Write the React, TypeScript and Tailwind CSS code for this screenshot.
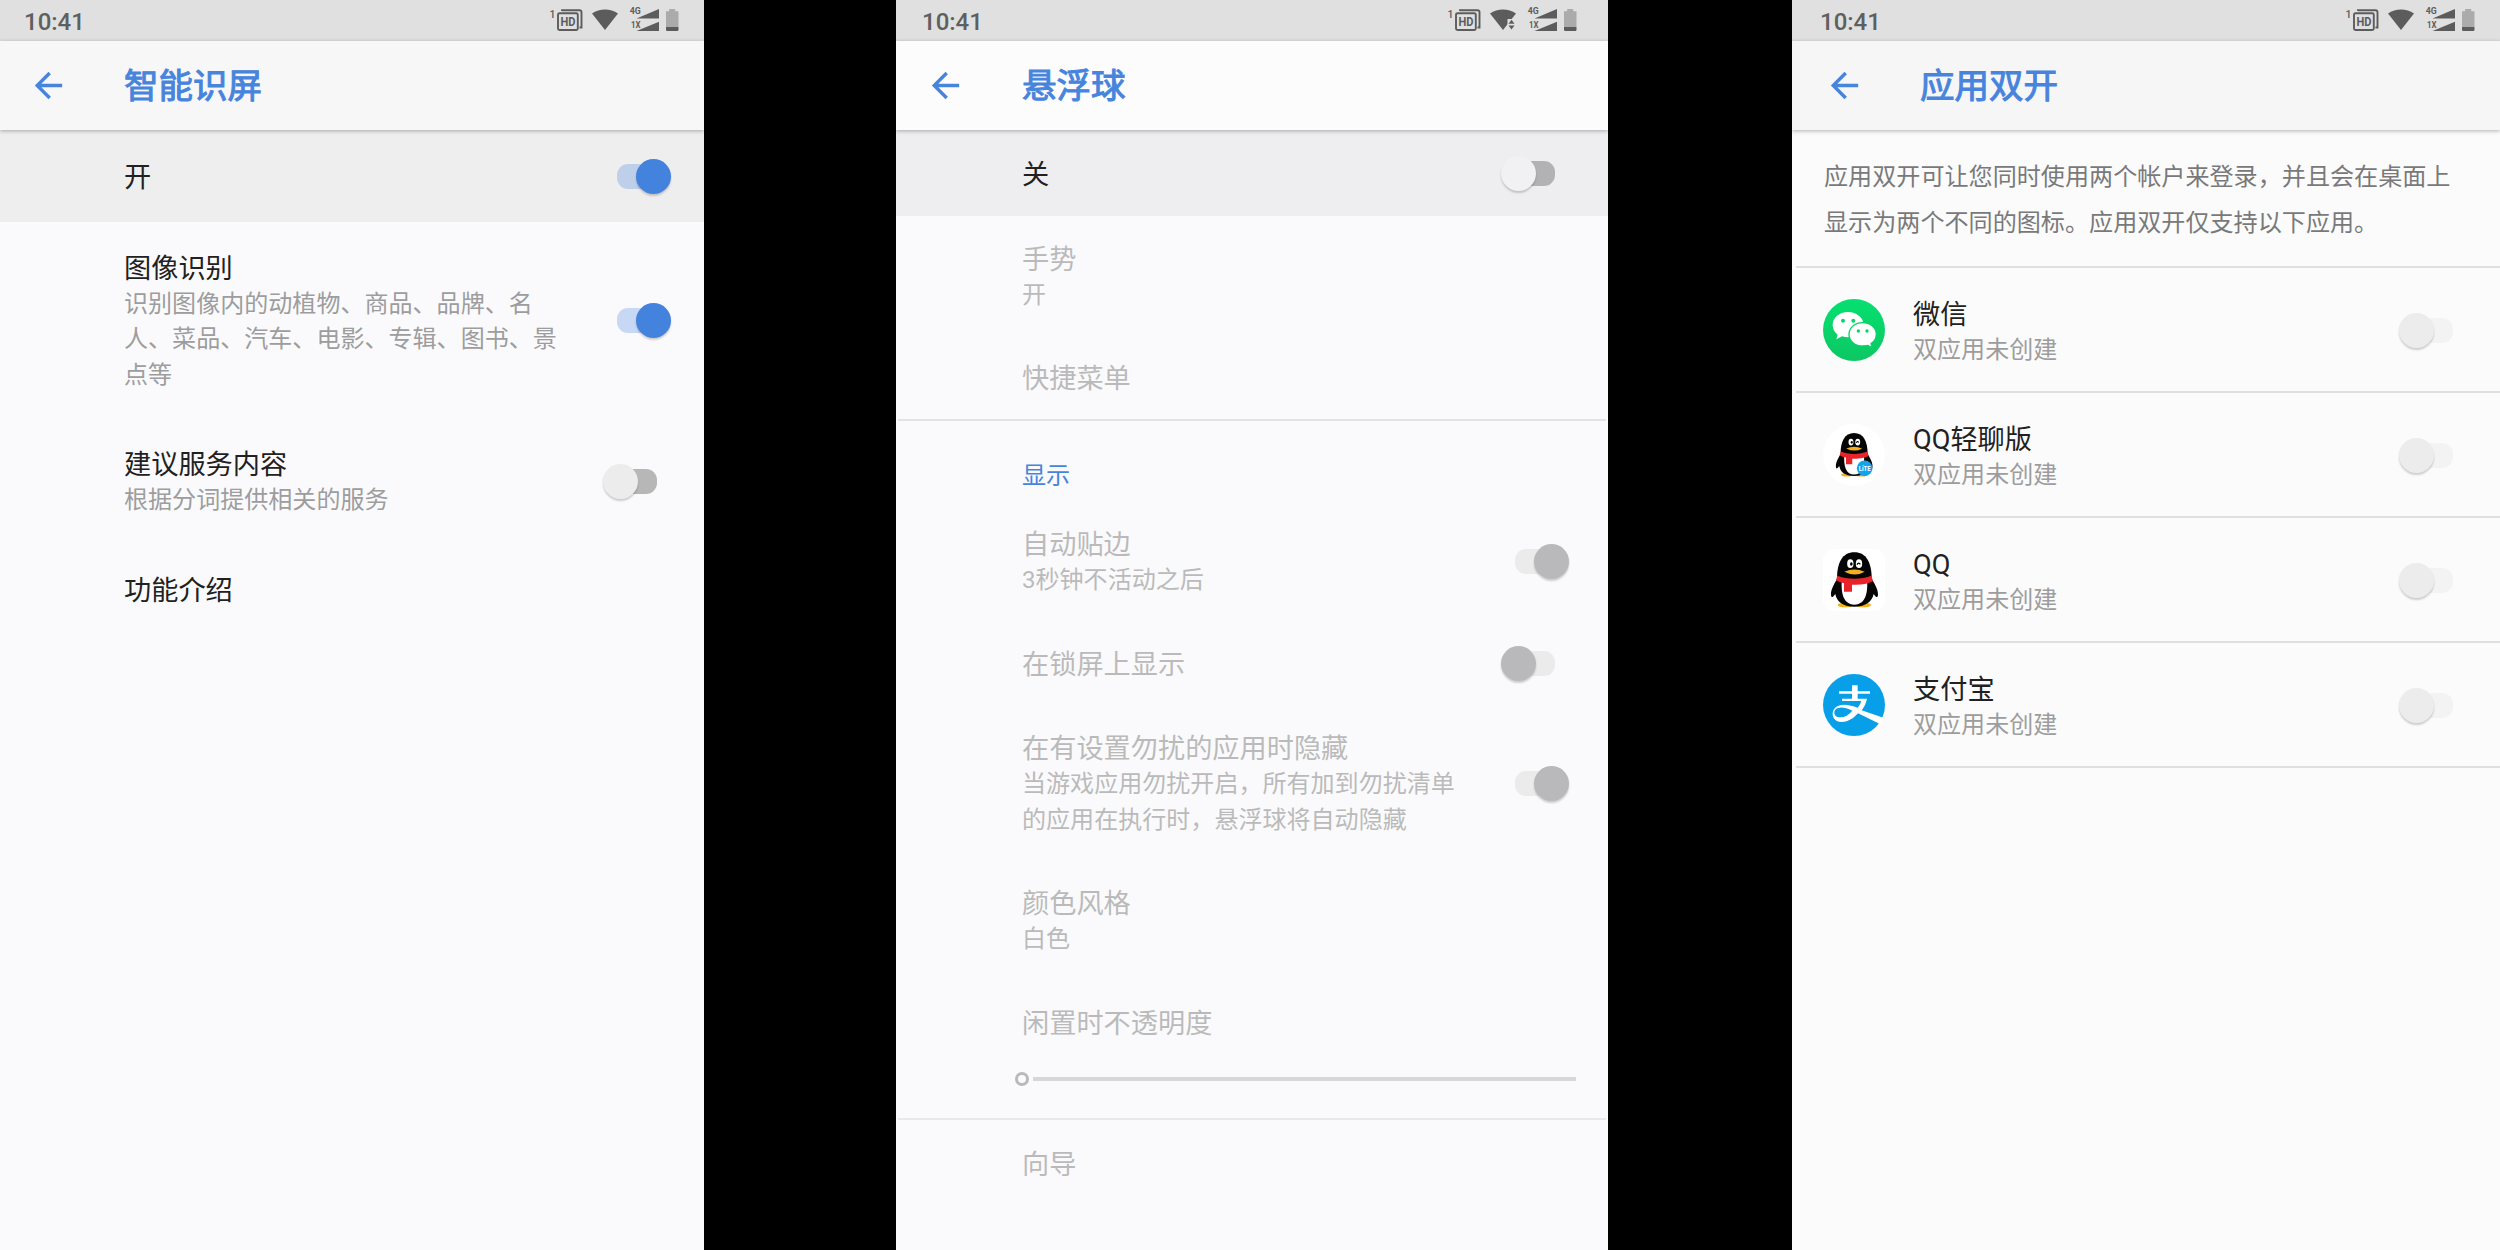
import type { ReactNode } from 'react';

type Tone = 'on' | 'off' | 'offWhite' | 'disabledOn' | 'disabledOff' | 'faint';

const toneStyles: Record<Tone, { side: string; knob: string; track: string }> = {
  on: { side: 'right-0', knob: 'bg-[#4382dd]', track: 'bg-[#4382dd]/28' },
  off: { side: 'left-0', knob: 'bg-[#ececec]', track: 'bg-[#b7b7b8]' },
  offWhite: { side: 'left-0', knob: 'bg-[#f1f0f2]', track: 'bg-[#b2b1b3]' },
  disabledOn: { side: 'right-0', knob: 'bg-[#b9b9bb]', track: 'bg-[#ebebec]' },
  disabledOff: { side: 'left-0', knob: 'bg-[#b9b9bb]', track: 'bg-[#ebebec]' },
  faint: { side: 'left-0', knob: 'bg-[#ececec]', track: 'bg-[#f3f3f3]' },
};

function Toggle({ tone }: { tone: Tone }) {
  const s = toneStyles[tone];
  return (
    <div className="relative flex h-[35px] w-[68px] shrink-0 items-center justify-center">
      <div className={`h-[25px] w-[40px] rounded-[11px] ${s.track}`} />
      <div className={`absolute top-0 size-[35px] rounded-full shadow-[0_2px_2px_rgba(0,0,0,0.18)] ${s.side} ${s.knob}`} />
    </div>
  );
}

function StatusIcons({ traffic }: { traffic?: boolean }) {
  return (
    <svg width="130" height="41" viewBox="0 0 130 41" fill="#5c5c5c" fontFamily="Roboto, sans-serif">
      <text x="0.5" y="17.5" fontSize="10.5" fontWeight="500">1</text>
      <path d="M13 11V10.2h17.5a2 2 0 0 1 2 2V27.5h-2" fill="none" stroke="#5c5c5c" strokeWidth="1.9" />
      <rect x="9" y="13.2" width="19.8" height="16.8" rx="1.5" fill="none" stroke="#5c5c5c" strokeWidth="1.9" />
      <text x="11.4" y="26.2" fontSize="12.5" fontWeight="700" textLength="15" lengthAdjust="spacingAndGlyphs">HD</text>
      <path d="M43 13.5C50.5 8.3 61.5 8.3 69 13.5L56 30Z" />
      {traffic && (
        <>
          <path d="M60.5 19h9v12h-9z" fill="#e0e0e0" />
          <path d="M61.5 23.8l3-4 3 4zM61.5 25.6h6l-3 4z" />
        </>
      )}
      <text x="80.8" y="14.3" fontSize="8.5" fontWeight="700" textLength="11" lengthAdjust="spacingAndGlyphs">4G</text>
      <text x="82" y="28.3" fontSize="8.5" fontWeight="700" textLength="9.5" lengthAdjust="spacingAndGlyphs">1X</text>
      <path d="M110 9v9.5H87.5zM110 21.8V31H87.5z" />
      <path d="M117 11.2h3.2V9h6v2.2h3.3V27H117z" fill="#ababab" />
      <path d="M117 27h12.5v2.8a1.2 1.2 0 0 1-1.2 1.2h-10.1a1.2 1.2 0 0 1-1.2-1.2z" />
    </svg>
  );
}

function StatusBar({ className, traffic }: { className: string; traffic?: boolean }) {
  return (
    <div className={`flex h-[41px] shrink-0 items-center justify-between bg-[#e0e0e0] ${className}`}>
      <span className="pt-[2px] text-[24px] leading-[28px] font-medium text-[#5f5f5f]">10:41</span>
      <StatusIcons traffic={traffic} />
    </div>
  );
}

function AppBar({ title, className }: { title: string; className: string }) {
  return (
    <div className={`relative flex h-[89px] shrink-0 items-center shadow-[0_1px_4px_rgba(0,0,0,0.3)] ${className}`}>
      <svg width="41" height="41" viewBox="0 0 24 24" className="shrink-0" fill="#4784dc">
        <path d="M20 11H7.83l5.59-5.59L12 4l-8 8 8 8 1.41-1.41L7.83 13H20z" />
      </svg>
      <h1 className="text-[34.5px] leading-[48px] text-[#4784dc] [-webkit-text-stroke:1px_#4784dc]">{title}</h1>
    </div>
  );
}

function Item({
  title,
  lines = [],
  tone,
  className,
  titleClass = 'text-[#212121]',
  lineClass = 'text-[#9d9d9e]',
}: {
  title: string;
  lines?: string[];
  tone?: Tone;
  className: string;
  titleClass?: string;
  lineClass?: string;
}) {
  return (
    <div className={`flex shrink-0 items-center justify-between ${className}`}>
      <div className="pt-1">
        <div className={`text-[27.2px] leading-[35px] ${titleClass}`}>{title}</div>
        {lines.map((line) => (
          <div key={line} className={`text-[24.05px] leading-[35.6px] whitespace-nowrap ${lineClass}`}>
            {line}
          </div>
        ))}
      </div>
      {tone && <Toggle tone={tone} />}
    </div>
  );
}

function WechatIcon() {
  return (
    <svg width="62" height="62" viewBox="24 27 186 186" className="shrink-0">
      <defs>
        <linearGradient id="wechat" x1="0" y1="0" x2="0" y2="1">
          <stop offset="0" stopColor="#06e070" />
          <stop offset="1" stopColor="#0cc763" />
        </linearGradient>
      </defs>
      <circle cx="117" cy="120" r="93" fill="url(#wechat)" />
      <path d="M99 66C73 66 53 83 53 105c0 12 6 22 15 29l-4 14 17-9c6 2 12 3 18 3 26 0 47-16 47-37S125 66 99 66Z" fill="#fff" />
      <path d="M143 98C120 98 102 113 102 133s18 35 41 35c5 0 10-1 15-2l14 7-4-12c10-6 16-16 16-28 0-20-18-35-41-35Z" fill="#fff" stroke="#0ad369" strokeWidth="4" />
      <g fill="#0ad369">
        <circle cx="84" cy="92" r="6" />
        <circle cx="115" cy="92" r="6" />
        <circle cx="130" cy="123" r="5" />
        <circle cx="156" cy="123" r="5" />
      </g>
    </svg>
  );
}

function AlipayIcon() {
  return (
    <svg width="62" height="62" viewBox="24 27 186 186" className="shrink-0">
      <circle cx="117" cy="120" r="93" fill="#069fe8" />
      <path d="M111 61h17v18h37v7h-37v15h28c-3 14-8 25-16 35l65 22-10 19-66-32c-16 18-33 26-49 26-16 0-27-10-27-24 0-17 13-28 34-28 14 0 27 4 41 9 5-6 9-13 11-20H81v-7h30V86H72v-7h39Zm1 76c-15-7-27-10-37-9-12 1-17 7-17 15s7 14 18 14c13 0 26-7 36-20Z" fill="#fff" fillRule="evenodd" />
    </svg>
  );
}

function Penguin() {
  return (
    <g>
      <ellipse cx="106" cy="585" rx="23" ry="7" fill="#f2b01e" />
      <ellipse cx="160" cy="585" rx="23" ry="7" fill="#f2b01e" />
      <path d="M85 500c-9 16-23 37-22 54 1 11 5 9 13-2 4 22 21 38 57 38s53-16 58-38c7 11 12 13 13 2 1-17-13-38-23-54Z" fill="#050505" />
      <path d="M96 505c-5 50 7 79 37 79s42-28 38-79Z" fill="#fff" />
      <path d="M81 506c0-48 16-79 52-79s52 31 52 79c-28 12-76 12-104 0Z" fill="#050505" />
      <ellipse cx="121" cy="461" rx="9.5" ry="13" fill="#fff" />
      <ellipse cx="147" cy="461" rx="9.5" ry="13" fill="#fff" />
      <ellipse cx="124" cy="462" rx="4" ry="5.5" fill="#050505" />
      <path d="M141 464q5-9 10-1" fill="none" stroke="#050505" strokeWidth="4" />
      <path d="M103 485q30-13 61 0-28 17-61 0Z" fill="#f2b01e" />
      <path d="M82 497c28 12 74 12 102 0l5 17c-18 9-42 12-63 10v21h-24v-25q-15-3-24-9Z" fill="#e8242a" />
    </g>
  );
}

function QQIcon() {
  return (
    <svg width="62" height="62" viewBox="39 417 186 186" className="shrink-0">
      <rect x="39" y="417" width="186" height="186" rx="34" fill="#fff" />
      <Penguin />
    </svg>
  );
}

function QQLiteIcon() {
  return (
    <svg width="62" height="62" viewBox="39 42 186 186" className="shrink-0">
      <circle cx="132" cy="135" r="93" fill="#fff" />
      <g transform="translate(28.5 -268) scale(0.78 0.79)">
        <Penguin />
      </g>
      <circle cx="164" cy="175" r="23.5" fill="#12a3ea" />
      <text x="146" y="182" fontSize="19" fontWeight="700" fill="#fff" fontFamily="Roboto, sans-serif" textLength="36" lengthAdjust="spacingAndGlyphs">LiTE</text>
    </svg>
  );
}

function AppRow({ icon, name }: { icon: ReactNode; name: string }) {
  return (
    <div className="ml-1 flex h-[125px] shrink-0 items-center border-b-2 border-[#dfdfdf] pt-[1px] pr-[33px] pl-[27px]">
      {icon}
      <div className="ml-[28px] grow pt-[6px]">
        <div className="text-[27.2px] leading-[35px] text-[#212121]">{name}</div>
        <div className="text-[24.05px] leading-[35.6px] text-[#9d9d9e]">双应用未创建</div>
      </div>
      <Toggle tone="faint" />
    </div>
  );
}

const dim = { titleClass: 'text-[#bababb]', lineClass: 'text-[#bababb]' };

export default function App() {
  return (
    <div className="flex h-[1250px] w-[2500px] overflow-hidden bg-black font-[Roboto,'Noto_Sans_CJK_SC',sans-serif]">
      <section className="flex w-[704px] shrink-0 flex-col overflow-hidden bg-[#fafafc]">
        <StatusBar className="pr-[25px] pl-[24px]" />
        <AppBar title="智能识屏" className="gap-[55px] bg-[#f7f7f7] pl-[28px]" />
        <Item title="开" tone="on" className="h-[92px] bg-[#eeeeef] pr-[33px] pl-[124px]" />
        <Item
          title="图像识别"
          lines={['识别图像内的动植物、商品、品牌、名', '人、菜品、汽车、电影、专辑、图书、景', '点等']}
          tone="on"
          className="h-[197px] pr-[33px] pl-[124px]"
        />
        <Item title="建议服务内容" lines={['根据分词提供相关的服务']} tone="off" className="h-[125px] pr-[33px] pl-[124px]" />
        <Item title="功能介绍" className="h-[90px] pl-[124px]" />
      </section>

      <section className="ml-[192px] flex w-[712px] shrink-0 flex-col overflow-hidden bg-[#fafafc]">
        <StatusBar className="pr-[31px] pl-[26px]" traffic />
        <AppBar title="悬浮球" className="gap-[56px] bg-[#fcfcfc] pl-[29px]" />
        <Item title="关" tone="offWhite" className="h-[86px] bg-[#eeedef] pr-[39px] pl-[126px]" />
        <Item title="手势" lines={['开']} className="h-[120px] pl-[126px]" {...dim} />
        <div className="mx-[2px] flex h-[85px] shrink-0 flex-col border-b-2 border-[#e3e2e4]">
          <Item title="快捷菜单" className="h-[83px] pl-[124px]" {...dim} />
        </div>
        <div className="h-[81px] shrink-0 pt-[38px] pl-[126px] text-[24.05px] leading-[35.6px] text-[#4784dc]">显示</div>
        <Item title="自动贴边" lines={['3秒钟不活动之后']} tone="disabledOn" className="h-[119px] pr-[39px] pl-[126px]" {...dim} />
        <Item title="在锁屏上显示" tone="disabledOff" className="h-[84px] pr-[39px] pl-[126px]" {...dim} />
        <Item
          title="在有设置勿扰的应用时隐藏"
          lines={['当游戏应用勿扰开启，所有加到勿扰清单', '的应用在执行时，悬浮球将自动隐藏']}
          tone="disabledOn"
          className="h-[156px] pr-[39px] pl-[126px]"
          {...dim}
        />
        <Item title="颜色风格" lines={['白色']} className="h-[119px] pl-[126px]" {...dim} />
        <div className="mx-[2px] flex h-[140px] shrink-0 flex-col border-b-2 border-[#e9e9ea] pl-[117px]">
          <div className="pt-[27px] pl-[7px] text-[27.2px] leading-[35px] text-[#bababb]">闲置时不透明度</div>
          <div className="flex items-center gap-[4px] pt-[30px]">
            <div className="h-[14px] w-[14px] rounded-full border-[3.5px] border-[#b9b9bb]" />
            <div className="h-[4px] w-[543px] bg-[#d7d7d8]" />
          </div>
        </div>
        <Item title="向导" className="h-[86px] pl-[126px]" {...dim} />
      </section>

      <section className="ml-[184px] flex w-[708px] shrink-0 flex-col overflow-hidden bg-[#fbfbfc]">
        <StatusBar className="pr-[25px] pl-[28px]" />
        <AppBar title="应用双开" className="gap-[55px] bg-[#f6f6f7] pl-[32px]" />
        <div className="ml-1 h-[138px] shrink-0 border-b-2 border-[#dfdfdf] pt-[24px] pl-[28px] text-[24.1px] leading-[46.4px] whitespace-nowrap text-[#79797a]">
          <p>应用双开可让您同时使用两个帐户来登录，并且会在桌面上</p>
          <p>显示为两个不同的图标。应用双开仅支持以下应用。</p>
        </div>
        <AppRow icon={<WechatIcon />} name="微信" />
        <AppRow icon={<QQLiteIcon />} name="QQ轻聊版" />
        <AppRow icon={<QQIcon />} name="QQ" />
        <AppRow icon={<AlipayIcon />} name="支付宝" />
      </section>
    </div>
  );
}
